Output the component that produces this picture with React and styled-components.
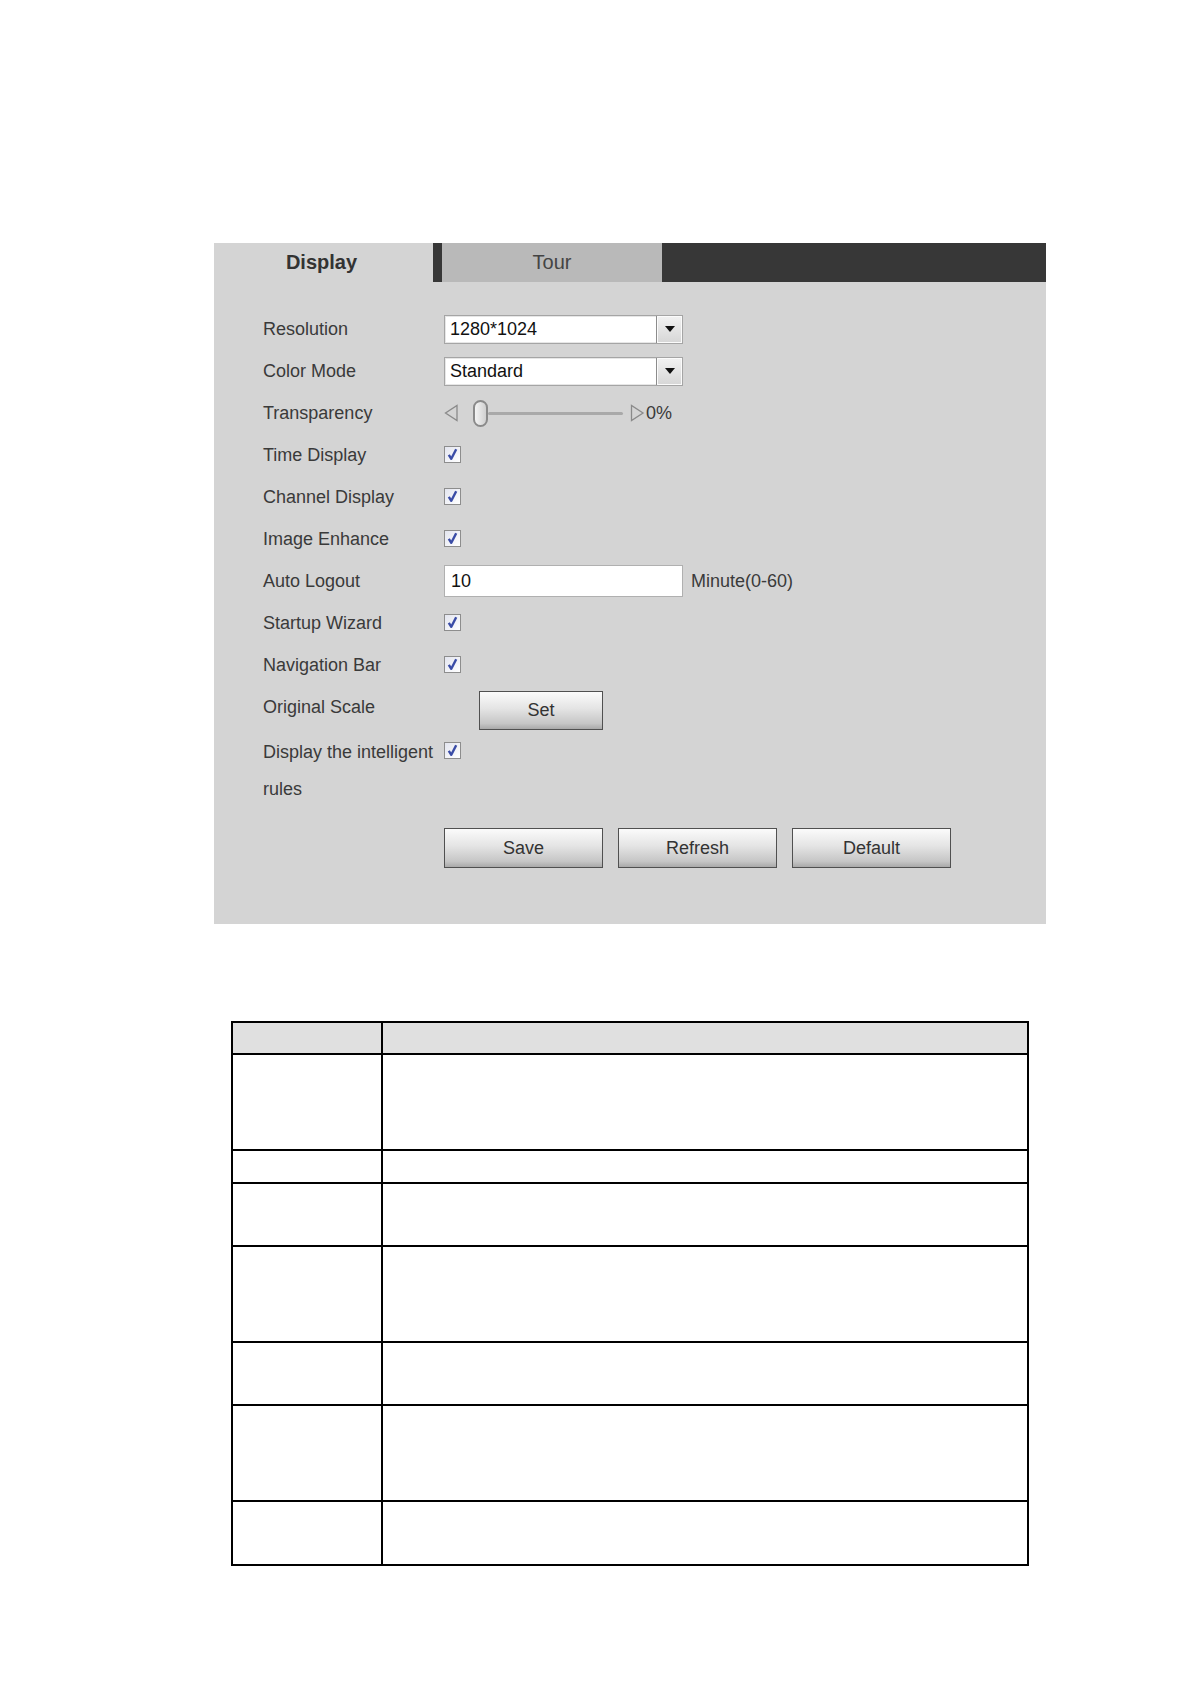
import React from 'react'
import styled, { createGlobalStyle } from 'styled-components'

const GlobalStyle = createGlobalStyle`
  body {
    margin: 0;
    background: #ffffff;
    font-family: 'Liberation Sans', Arial, sans-serif;
  }
`

const Page = styled.div`
  padding: 243px 0 120px 214px;
`

const Panel = styled.section`
  width: 832px;
  height: 681px;
  background: #d4d4d4;
`

const TabBar = styled.div`
  display: flex;
  height: 39px;
  background: #373737;
`

const Tab = styled.div`
  width: ${({ $w }) => $w}px;
  margin-left: ${({ $gap }) => $gap || 0}px;
  display: flex;
  align-items: center;
  justify-content: center;
  font-size: 20px;
  font-weight: ${({ $active }) => ($active ? 700 : 400)};
  color: ${({ $active }) => ($active ? '#333' : '#444')};
  background: ${({ $active }) => ($active ? '#d4d4d4' : '#b9b9b9')};
  padding-right: ${({ $active }) => ($active ? '4px' : '0')};
  box-sizing: border-box;
`

const Form = styled.div`
  padding: 26px 0 0 49px;
`

const Row = styled.div`
  display: flex;
  align-items: ${({ $top }) => ($top ? 'flex-start' : 'center')};
  height: ${({ $top }) => ($top ? 'auto' : '42px')};
  padding-top: ${({ $top }) => ($top ? '6px' : '0')};
`

const Label = styled.div`
  width: 181px;
  flex-shrink: 0;
  font-size: 18px;
  color: #3a3a3a;
  line-height: ${({ $lh }) => $lh || 'normal'};
`

const Select = styled.div`
  width: 239px;
  height: 29px;
  box-sizing: border-box;
  display: flex;
  background: #fff;
  border: 1px solid #a5a5a5;
  box-shadow: inset 0 0 0 1px #e6e6e6;
`

const SelectText = styled.div`
  flex: 1;
  padding-left: 5px;
  display: flex;
  align-items: center;
  font-size: 18px;
  color: #111;
`

const DropButton = styled.div`
  width: 25px;
  display: flex;
  align-items: center;
  justify-content: center;
  border-left: 1px solid #8c8c8c;
  background: linear-gradient(#f2f2f2, #d6d6d6);
  box-shadow: inset 0 0 0 1px #fbfbfb;
`

const TextInput = styled.div`
  width: 239px;
  height: 32px;
  box-sizing: border-box;
  border: 1px solid #b0b0b0;
  background: #fff;
  padding-left: 6px;
  display: flex;
  align-items: center;
  font-size: 18px;
  color: #111;
`

const Hint = styled.span`
  margin-left: 8px;
  font-size: 18px;
  color: #3a3a3a;
`

const SliderWrap = styled.div`
  display: flex;
  align-items: center;
`

const Thumb = styled.div`
  width: 15px;
  height: 27px;
  box-sizing: border-box;
  margin-left: 14px;
  border: 2px solid #8a8a8a;
  border-radius: 8px;
  background: linear-gradient(to right, #f4f4f4, #d0d0d0);
`

const Track = styled.div`
  width: 135px;
  height: 3px;
  margin-right: 7px;
  background: #a9a9a9;
  border-radius: 2px;
`

const Percent = styled.span`
  font-size: 18px;
  color: #3a3a3a;
  margin-left: 1px;
`

const Box = styled.div`
  width: 17px;
  height: 17px;
  box-sizing: border-box;
  border: 1px solid #8d8d8d;
  background: linear-gradient(135deg, #e3e5ef, #ffffff);
  display: flex;
  align-items: center;
  justify-content: center;
  margin-top: ${({ $mt }) => $mt || 0}px;
`

const Button = styled.div`
  width: ${({ $w }) => $w || 159}px;
  height: ${({ $h }) => $h || 40}px;
  box-sizing: border-box;
  margin-left: ${({ $ml }) => $ml || 0}px;
  margin-top: ${({ $mt }) => $mt || 0}px;
  border: 1px solid #505050;
  background: linear-gradient(to bottom, #fbfbfb 0%, #e4e4e4 45%, #c6c6c6 85%, #a9a9a9 100%);
  display: flex;
  align-items: center;
  justify-content: center;
  font-size: 18px;
  color: #333;
`

const ButtonRow = styled.div`
  display: flex;
  gap: 15px;
  padding-left: 181px;
  margin-top: 20px;
`

const Table = styled.table`
  margin: 97px 0 0 17px;
  width: 798px;
  border-collapse: collapse;
  border: 2px solid #000;
  td {
    border: 2px solid #000;
    padding: 0;
  }
`

const Cell = styled.td`
  height: ${({ $h }) => $h}px;
  width: ${({ $w }) => ($w ? `${$w}px` : 'auto')};
  background: ${({ $head }) => ($head ? '#e0e0e0' : '#fff')};
`

const Check = ({ mt }) => (
  <Box $mt={mt}>
    <svg width="13" height="13" viewBox="0 0 13 13">
      <path d="M2.8 6.8 L5.3 10.8 L10.2 1.2" fill="none" stroke="#3a4ca6" strokeWidth="2.4" strokeLinejoin="round" />
    </svg>
  </Box>
)

const Dropdown = ({ value }) => (
  <Select>
    <SelectText>{value}</SelectText>
    <DropButton>
      <svg width="10" height="6" viewBox="0 0 10 6">
        <polygon points="0,0 10,0 5,6" fill="#111" />
      </svg>
    </DropButton>
  </Select>
)

const Arrow = ({ dir }) => (
  <svg width="15" height="18" viewBox="0 0 15 18">
    {dir === 'left' ? (
      <polygon points="13,1.5 13,16.5 1.5,9" fill="none" stroke="#8a8a8a" strokeWidth="1.3" />
    ) : (
      <polygon points="1.5,1.5 1.5,16.5 13,9" fill="none" stroke="#8a8a8a" strokeWidth="1.3" />
    )}
  </svg>
)

const checkRows = ['Time Display', 'Channel Display', 'Image Enhance']
const tableRows = [96, 33, 63, 96, 63, 96, 64]

const App = () => {
  return (
    <Page>
      <GlobalStyle />
      <Panel>
        <TabBar>
          <Tab $active $w={219}>Display</Tab>
          <Tab $w={220} $gap={9}>Tour</Tab>
        </TabBar>
        <Form>
          <Row>
            <Label>Resolution</Label>
            <Dropdown value="1280*1024" />
          </Row>
          <Row>
            <Label>Color Mode</Label>
            <Dropdown value="Standard" />
          </Row>
          <Row>
            <Label>Transparency</Label>
            <SliderWrap>
              <Arrow dir="left" />
              <Thumb />
              <Track />
              <Arrow dir="right" />
              <Percent>0%</Percent>
            </SliderWrap>
          </Row>
          {checkRows.map((t) => (
            <Row key={t}>
              <Label>{t}</Label>
              <Check mt={-2} />
            </Row>
          ))}
          <Row>
            <Label>Auto Logout</Label>
            <TextInput>10</TextInput>
            <Hint>Minute(0-60)</Hint>
          </Row>
          <Row>
            <Label>Startup Wizard</Label>
            <Check mt={-2} />
          </Row>
          <Row>
            <Label>Navigation Bar</Label>
            <Check mt={-2} />
          </Row>
          <Row>
            <Label>Original Scale</Label>
            <Button $w={124} $h={39} $ml={35} $mt={6}>Set</Button>
          </Row>
          <Row $top>
            <Label $lh="37px">Display the intelligent rules</Label>
            <Check mt={8} />
          </Row>
          <ButtonRow>
            <Button>Save</Button>
            <Button>Refresh</Button>
            <Button>Default</Button>
          </ButtonRow>
        </Form>
      </Panel>

      <Table>
        <tbody>
          <tr>
            <Cell $head $h={30} $w={148} />
            <Cell $head $h={30} />
          </tr>
          {tableRows.map((h, i) => (
            <tr key={i}>
              <Cell $h={h - 2} $w={148} />
              <Cell $h={h - 2} />
            </tr>
          ))}
        </tbody>
      </Table>
    </Page>
  )
}

export default App
